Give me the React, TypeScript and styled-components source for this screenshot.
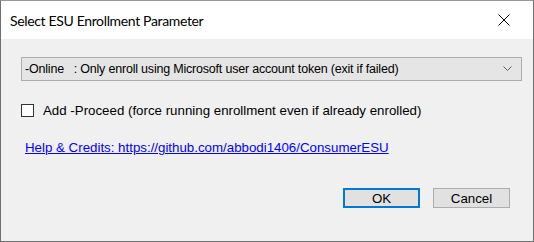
import React from "react";
import styled, { createGlobalStyle } from "styled-components";

const GlobalStyle = createGlobalStyle`
  html, body {
    margin: 0;
    padding: 0;
    background: #f0f0f0;
  }
`;

const Window = styled.div`
  width: 534px;
  height: 242px;
  box-sizing: border-box;
  border: 1px solid #707070;
  border-top-color: #9a9a9a;
  background: #f0f0f0;
  display: flex;
  flex-direction: column;
  font-family: "Liberation Sans", Arial, sans-serif;
`;

const TitleBar = styled.div`
  height: 38px;
  background: #fff;
  display: flex;
  align-items: center;
  justify-content: space-between;
  padding: 0 0 0 9px;
  flex-shrink: 0;
`;

const Title = styled.div`
  font-family: Lato, "Noto Sans", sans-serif;
  font-size: 14px;
  letter-spacing: -0.35px;
  color: #000;
  margin-top: 1px;
`;

const CloseButton = styled.div`
  width: 32px;
  height: 38px;
  display: flex;
  align-items: center;
  justify-content: center;
  margin-right: 13px;
`;

const Body = styled.div`
  flex: 1;
  display: flex;
  flex-direction: column;
  padding: 18px 11px 0 20px;
  font-size: 13.3px;
  color: #000;
`;

const Combo = styled.div`
  height: 24px;
  box-sizing: border-box;
  border: 1px solid #adadad;
  background: #e5e5e5;
  display: flex;
  align-items: center;
  justify-content: space-between;
  padding: 0 9px 0 3px;
  white-space: pre;
  font-size: 12.5px;
  letter-spacing: -0.2px;
`;

const CheckRow = styled.label`
  display: flex;
  align-items: center;
  gap: 9px;
  margin-top: 22px;
  height: 14px;
`;

const Box = styled.span`
  width: 13px;
  height: 13px;
  box-sizing: border-box;
  border: 1px solid #333;
  background: #fff;
  flex-shrink: 0;
`;

const HelpLink = styled.a`
  margin-top: 23px;
  margin-left: 4px;
  color: #0000ff;
  text-decoration: underline;
  align-self: flex-start;
`;

const Buttons = styled.div`
  display: flex;
  justify-content: flex-end;
  gap: 13px;
  margin-top: 33px;
  margin-right: 12px;
`;

const Button = styled.div<{ $default?: boolean }>`
  width: 77px;
  height: 20px;
  box-sizing: border-box;
  display: flex;
  align-items: center;
  justify-content: center;
  background: #e1e1e1;
  border: ${(p) => (p.$default ? "2px solid #0078d7" : "1px solid #adadad")};
`;

const App: React.FC = () => {
  return (
    <>
      <GlobalStyle />
      <Window>
        <TitleBar>
          <Title>Select ESU Enrollment Parameter</Title>
          <CloseButton>
            <svg width="12" height="12" viewBox="0 0 12 12">
              <path d="M0.5 0.5 L11.5 11.5 M11.5 0.5 L0.5 11.5" stroke="#000" strokeWidth="1" fill="none" />
            </svg>
          </CloseButton>
        </TitleBar>
        <Body>
          <Combo>
            <span>-Online   : Only enroll using Microsoft user account token (exit if failed)</span>
            <svg width="9" height="6" viewBox="0 0 9 6">
              <path d="M0.5 0.5 L4.5 4.5 L8.5 0.5" stroke="#606060" strokeWidth="1" fill="none" />
            </svg>
          </Combo>
          <CheckRow>
            <Box />
            <span>Add -Proceed (force running enrollment even if already enrolled)</span>
          </CheckRow>
          <HelpLink href="#">Help &amp; Credits: https://github.com/abbodi1406/ConsumerESU</HelpLink>
          <Buttons>
            <Button $default>OK</Button>
            <Button>Cancel</Button>
          </Buttons>
        </Body>
      </Window>
    </>
  );
};

export default App;
